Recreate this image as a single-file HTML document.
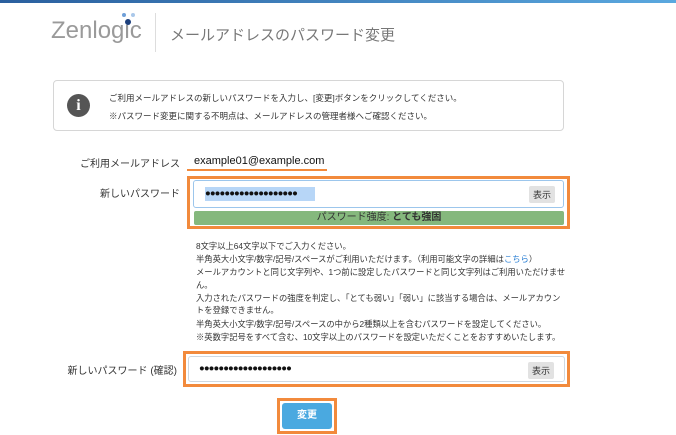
<!DOCTYPE html>
<html><head><meta charset="utf-8"><style>
*{margin:0;padding:0;box-sizing:border-box}
body{width:676px;height:435px;background:#fff;position:relative;overflow:hidden;font-family:"Liberation Sans","Noto Sans CJK JP",sans-serif;color:#333}
.a{position:absolute}
.top{left:0;top:0;width:676px;height:3px;background:linear-gradient(90deg,#2a5f9e,#5aa8df)}
.logo{left:51px;top:17px;font-size:24px;color:#9a9a9a;letter-spacing:0px}
.title{left:170px;top:24px;font-size:15px;color:#777}
.info{left:53px;top:80px;width:511px;height:51px;border:1px solid #d6d6d6;border-radius:4px}
.it{left:109px;font-size:8.5px;color:#333;white-space:nowrap}
.lab{font-size:10px;color:#333;text-align:right;width:160px;white-space:nowrap}
.ob{border:3px solid #f28a3c}
.inp{background:#fff;border:1px solid #cfd8e0;border-radius:3px}
.btn{font-size:9px;background:#e2e2e2;border-radius:2px;padding:2px 4px;color:#333}
.h{left:196px;font-size:8.3px;color:#333;white-space:nowrap}
</style></head><body>
<div class="a top"></div>
<div class="a logo">Zenlogic</div>
<div class="a" style="left:122px;top:13px;width:4px;height:4px;border-radius:50%;background:#6f9fd8"></div>
<div class="a" style="left:131px;top:13px;width:4px;height:4px;border-radius:50%;background:#aac8ea"></div>
<div class="a" style="left:125px;top:19px;width:6px;height:6px;border-radius:50%;background:#1c3f7c"></div>
<div class="a" style="left:155px;top:13px;width:1px;height:39px;background:#ddd"></div>
<div class="a title">メールアドレスのパスワード変更</div>
<div class="a info"></div>
<div class="a" style="left:67px;top:94px;width:23px;height:23px;border-radius:50%;background:#555;color:#fff;font:bold 16px/23px 'Liberation Serif',serif;text-align:center">i</div>
<div class="a it" style="top:92px">ご利用メールアドレスの新しいパスワードを入力し、[変更]ボタンをクリックしてください。</div>
<div class="a it" style="top:110px">※パスワード変更に関する不明点は、メールアドレスの管理者様へご確認ください。</div>
<div class="a lab" style="left:20px;top:155px">ご利用メールアドレス</div>
<div class="a" style="left:194px;top:155px;font-size:11px;color:#111">example01@example.com</div>
<div class="a" style="left:187px;top:169px;width:140px;height:2px;background:#f28a3c"></div>
<div class="a lab" style="left:20px;top:185px">新しいパスワード</div>
<div class="a ob" style="left:187px;top:176px;width:383px;height:53px"></div>
<div class="a inp" style="left:193px;top:180px;width:371px;height:28px;border-color:#9cc6ec"></div>
<div class="a" style="left:205px;top:187px;width:110px;height:14px;background:#b7d6f7;font-size:9.5px;line-height:14px;letter-spacing:-0.9px;color:#111">●●●●●●●●●●●●●●●●●●●</div>
<div class="a btn" style="left:529px;top:186px">表示</div>
<div class="a" style="left:194px;top:211px;width:370px;height:14px;background:#85b87d;border-radius:2px;font-size:10px;line-height:14px;text-align:center;color:#333">パスワード強度: <b>とても強固</b></div>
<div class="a h" style="top:240px">8文字以上64文字以下でご入力ください。</div>
<div class="a h" style="top:253px">半角英大小文字/数字/記号/スペースがご利用いただけます。（利用可能文字の詳細は<span style="color:#2a7fd4">こちら</span>）</div>
<div class="a h" style="top:266px">メールアカウントと同じ文字列や、1つ前に設定したパスワードと同じ文字列はご利用いただけませ</div>
<div class="a h" style="top:279px">ん。</div>
<div class="a h" style="top:292px">入力されたパスワードの強度を判定し、「とても弱い」「弱い」に該当する場合は、メールアカウン</div>
<div class="a h" style="top:304px">トを登録できません。</div>
<div class="a h" style="top:318px">半角英大小文字/数字/記号/スペースの中から2種類以上を含むパスワードを設定してください。</div>
<div class="a h" style="top:331px">※英数字記号をすべて含む、10文字以上のパスワードを設定いただくことをおすすめいたします。</div>
<div class="a lab" style="left:17px;top:362px">新しいパスワード (確認)</div>
<div class="a ob" style="left:183px;top:351px;width:387px;height:36px"></div>
<div class="a inp" style="left:188px;top:356px;width:377px;height:26px"></div>
<div class="a" style="left:199px;top:362px;font-size:9.5px;line-height:14px;letter-spacing:-0.9px;color:#111">●●●●●●●●●●●●●●●●●●●</div>
<div class="a btn" style="left:528px;top:362px">表示</div>
<div class="a ob" style="left:277px;top:398px;width:60px;height:36px"></div>
<div class="a" style="left:282px;top:403px;width:50px;height:26px;background:#4aa9e0;border-radius:3px;color:#fff;font-size:10px;line-height:26px;text-align:center;font-weight:bold">変更</div>
</body></html>
